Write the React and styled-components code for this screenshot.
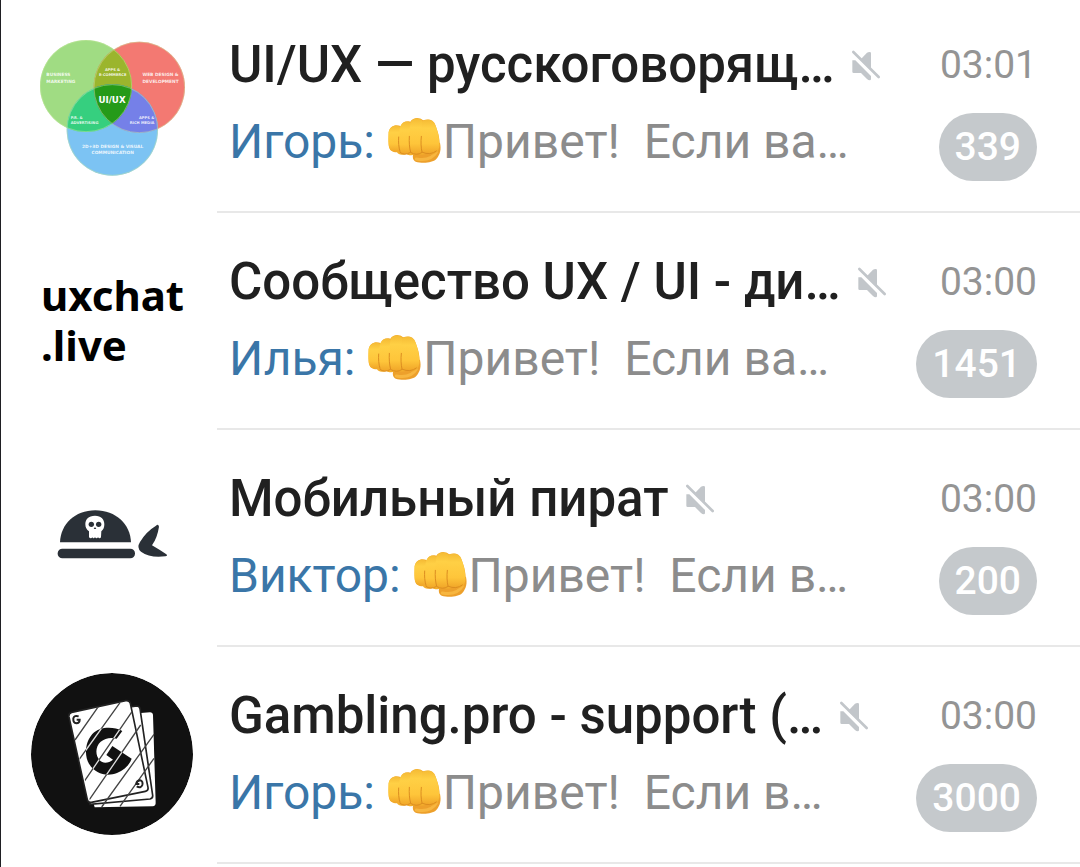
import React from "react";
import styled, { createGlobalStyle } from "styled-components";

const chats = [
  { title: "UI/UX — русскоговорящ…", from: "Игорь", text: "Привет!  Если ва…", time: "03:01", unread: 339, avatar: "venn" },
  { title: "Сообщество UX / UI - ди…", from: "Илья", text: "Привет!  Если ва…", time: "03:00", unread: 1451, avatar: "uxchat" },
  { title: "Мобильный пират", from: "Виктор", text: "Привет!  Если в…", time: "03:00", unread: 200, avatar: "pirate" },
  { title: "Gambling.pro - support (…", from: "Игорь", text: "Привет!  Если в…", time: "03:00", unread: 3000, avatar: "cards" }
];

const VennLogo = () => (
  <Logo viewBox="3 -24 486 486" aria-hidden="true">
    <defs>
      <clipPath id="green"><circle cx="168" cy="168" r="138" /></clipPath>
      <clipPath id="red"><circle cx="328" cy="172" r="137" /></clipPath>
    </defs>
    <circle cx="168" cy="168" r="138" fill="#a0dc84" />
    <circle cx="328" cy="172" r="137" fill="#f37a72" />
    <circle cx="247" cy="300" r="137" fill="#7cc3f3" />
    <circle cx="328" cy="172" r="137" fill="#9cb52e" clipPath="url(#green)" />
    <circle cx="247" cy="300" r="137" fill="#37cf7f" clipPath="url(#green)" />
    <g clipPath="url(#red)">
      <circle cx="247" cy="300" r="137" fill="#7580e8" />
      <g clipPath="url(#green)">
        <circle cx="247" cy="300" r="137" fill="#259a1a" />
      </g>
    </g>
    <g fill="none" stroke="#c8e8a0" strokeWidth="2" opacity="0.7">
      <circle cx="168" cy="168" r="137" />
      <circle cx="328" cy="172" r="136" />
      <circle cx="247" cy="300" r="136" />
    </g>
    <g fill="#fff" fillOpacity="0.85" fontFamily="'DejaVu Sans', sans-serif" fontWeight="700" fontSize="13">
      <text x="49" y="139">BUSINESS</text>
      <text x="49" y="158">MARKETING</text>
      <text x="248" y="122" textAnchor="middle" fontSize="11">APPS &amp;</text>
      <text x="248" y="137" textAnchor="middle" fontSize="11">E-COMMERCE</text>
      <text x="446" y="139" textAnchor="end">WEB DESIGN &amp;</text>
      <text x="446" y="158" textAnchor="end">DEVELOPMENT</text>
      <text x="122" y="266" fontSize="11">P.R. &amp;</text>
      <text x="122" y="281" fontSize="11">ADVERTISING</text>
      <text x="373" y="266" textAnchor="end" fontSize="11">APPS &amp;</text>
      <text x="373" y="281" textAnchor="end" fontSize="11">RICH MEDIA</text>
      <text x="248" y="354" textAnchor="middle">2D+3D DESIGN &amp; VISUAL</text>
      <text x="248" y="372" textAnchor="middle">COMMUNICATION</text>
      <text x="246" y="218" textAnchor="middle" fontSize="26" fillOpacity="1">UI/UX</text>
    </g>
  </Logo>
);

const PirateLogo = () => (
  <Logo viewBox="-27 -117 486 486" aria-hidden="true">
    <path d="M60 142C62 88 104 46 166 46S271 88 273 142Z" fill="#2a3037" />
    <rect x="53" y="161" width="232" height="29" rx="14" fill="#2a3037" />
    <path d="M348 92Q355 86 357 95Q352 128 336 151Q358 164 378 177Q385 182 376 184Q330 190 303 170Q289 158 300 141Q318 110 348 92Z" fill="#2a3037" />
    <path d="M165 62C145 62 136 74 136 88C136 98 140 104 147 109L147 127Q153 133 157 127Q160 133 165 127Q170 133 174 127Q179 133 183 127L184 109C191 104 193 97 193 88C193 73 184 62 165 62Z" fill="#fff" />
    <circle cx="154" cy="88" r="8" fill="#2a3037" />
    <circle cx="176" cy="88" r="8" fill="#2a3037" />
    <path d="M165 96L169 102L161 102Z" fill="#2a3037" />
  </Logo>
);

const CardsLogo = () => (
  <Logo viewBox="33 24 486 486" aria-hidden="true">
    <defs>
      <clipPath id="deck">
        <path d="M145 145L325 107L404 145L407 424L215 428Z" />
      </clipPath>
      <clipPath id="gMark">
        <path d="M307 198C280 184 239 184 217 207C195 232 192 272 208 298C226 328 262 335 291 324C312 316 328 301 335 281L277 243L259 270L279 284C266 295 248 296 239 286C225 271 226 244 242 230C255 219 273 216 290 221Z" />
      </clipPath>
    </defs>
    <circle cx="276" cy="267" r="243" fill="#111" />
    <path d="M222 420L215 156L390 142Q398 142 399 150L407 414Q407 423 398 424L224 427Z" fill="#fff" />
    <path d="M210 418L180 148L350 123Q358 123 360 131L398 391Q399 400 390 402Z" fill="#fff" stroke="#222" strokeWidth="5" />
    <path d="M155 142L317 107Q328 105 331 115L384 367Q386 377 376 379L214 412Q204 414 202 404L147 156Q145 145 155 142Z" fill="#fff" stroke="#222" strokeWidth="5" />
    <g clipPath="url(#deck)" stroke="#444" strokeWidth="4">
      <path d="M235 125L165 225M300 113L175 287M336 140L184 362M362 180L204 410M402 208L245 426M402 280L300 424" />
    </g>
    <path d="M307 198C280 184 239 184 217 207C195 232 192 272 208 298C226 328 262 335 291 324C312 316 328 301 335 281L277 243L259 270L279 284C266 295 248 296 239 286C225 271 226 244 242 230C255 219 273 216 290 221Z" fill="#111" />
    <g clipPath="url(#gMark)" stroke="#ddd" strokeWidth="4">
      <path d="M300 113L175 287M336 140L184 362M362 180L204 410M402 208L245 426" />
    </g>
    <g fill="none" stroke="#222" strokeWidth="6">
      <path d="M176 154Q163 150 160 160Q159 174 169 175Q179 174 179 164L170 164" />
      <path d="M350 364Q363 371 367 360Q370 348 360 346Q349 348 349 357L358 357" />
    </g>
  </Logo>
);

const Muted = () => (
  <MutedIcon viewBox="66 58 90 99" role="img" aria-label="Без звука">
    <path d="M96 88L114 69Q117 67 122 67Q126 67 126 71V119Z" />
    <path d="M70 92L79 92L126 139V148Q126 152 122 152Q118 152 114 148L96 130H74Q70 130 70 126Z" />
    <path d="M73 67L149 142" stroke="#c2c6ca" strokeWidth="8" strokeLinecap="round" />
  </MutedIcon>
);

const Fist = () => (
  <FistIcon viewBox="54 14 168 150" role="img" aria-label="👊">
    <defs>
      <linearGradient id="skin" x1="0" y1="0" x2="0" y2="1">
        <stop offset="0" stopColor="#f5bb35" />
        <stop offset="0.25" stopColor="#ffd045" />
        <stop offset="0.7" stopColor="#fec53a" />
        <stop offset="1" stopColor="#f0a528" />
      </linearGradient>
    </defs>
    <path d="M134 126C130 138 130 150 140 154C160 160 190 158 202 146C214 132 217 116 213 98L190 90Z" fill="#eda02b" />
    <path d="M142 146C165 150 190 146 202 126" fill="none" stroke="#f7b640" strokeWidth="9" strokeLinecap="round" />
    <path d="M59 66C62 48 80 40 96 48C100 34 112 30 124 34C132 20 152 20 162 30C178 24 194 28 199 44C206 62 213 82 212 106C211 120 202 131 188 132C182 132 178 130 174 128C168 134 150 134 144 129C138 136 118 137 112 130C100 136 88 134 84 126C66 126 60 116 59 104Z" fill="#f3ad2c" />
    <path d="M59 66C62 48 78 42 94 50L92 118C86 127 68 126 63 117C57 104 57 84 59 66Z" fill="url(#skin)" />
    <path d="M94 48C98 34 112 30 126 38L122 124C116 134 98 134 93 126C88 110 88 70 94 48Z" fill="url(#skin)" />
    <path d="M125 36C132 22 152 21 162 34L156 126C148 133 132 134 126 126C119 108 119 62 125 36Z" fill="url(#skin)" />
    <path d="M160 32C176 24 194 28 199 44C206 62 212 82 211 106C209 122 199 130 186 130C176 131 164 130 160 124C154 106 155 60 160 32Z" fill="url(#skin)" />
    <g fill="none" stroke="#dc8d20" strokeWidth="3" strokeLinecap="round">
      <path d="M89 80C88 96 89 110 93 123" />
      <path d="M121 78C120 96 121 112 125 126" />
      <path d="M157 78C155 96 156 112 159 125" />
      <path d="M93 126Q106 137 123 127M126 127Q142 137 158 127M160 126Q184 136 202 122" />
    </g>
  </FistIcon>
);

const TextLogo = () => (
  <Wordmark>
    uxchat
    <br />
    .live
  </Wordmark>
);

const avatars = {
  venn: <VennLogo />,
  uxchat: <TextLogo />,
  pirate: <PirateLogo />,
  cards: <CardsLogo />
};

const ChatRow = props => {
  const { chat } = props;
  return (
    <Row>
      <Avatar>{avatars[chat.avatar]}</Avatar>
      <Body>
        <TopLine>
          <Title>{chat.title}</Title>
          <Muted />
          <Time>{chat.time}</Time>
        </TopLine>
        <BottomLine>
          <Message>
            <Sender>{chat.from}: </Sender>
            <Fist />
            {chat.text}
          </Message>
          <Badge>{chat.unread}</Badge>
        </BottomLine>
      </Body>
    </Row>
  );
};

const App = () => {
  return (
    <Screen>
      <GlobalStyle />
      <ChatList>
        {chats.map(chat => (
          <ChatRow key={chat.title} chat={chat} />
        ))}
      </ChatList>
    </Screen>
  );
};

/* 
==== Component Styles ====
*/

const GlobalStyle = createGlobalStyle`
  * {
    box-sizing: border-box;
  }

  body {
    margin: 0;
    background: #fff;
    font-family: Roboto, "Noto Sans", sans-serif;
  }
`;

const Screen = styled.main`
  min-height: 100vh;
  border-left: 1px solid #1f1f23;
  overflow: hidden;
`;

/* first row is scrolled slightly under the top edge */
const ChatList = styled.ul`
  margin: -4px 0 0;
  padding: 0;
  list-style: none;
`;

const Row = styled.li`
  display: flex;
`;

const Avatar = styled.div`
  flex: none;
  width: 162px;
  height: 162px;
  margin: 26px 24px 0 30px;
  display: flex;
  align-items: center;
`;

const Logo = styled.svg`
  display: block;
  width: 100%;
  height: 100%;
  border-radius: 50%;
`;

const Wordmark = styled.div`
  padding-left: 10px;
  color: #000;
  font-family: "Noto Sans", sans-serif;
  font-size: 42px;
  font-weight: 700;
  line-height: 50px;
`;

const Body = styled.div`
  flex: 1;
  min-width: 0;
  padding: 40px 43px 30px 12px;
  border-bottom: 2px solid #e8e8e8;
`;

const TopLine = styled.div`
  display: flex;
  align-items: center;
  margin-bottom: 19px;
`;

const BottomLine = styled.div`
  display: flex;
  align-items: flex-start;
  justify-content: space-between;
`;

const Title = styled.h2`
  margin: 0;
  color: #202020;
  font-size: 51px;
  font-weight: 500;
  line-height: 58px;
  white-space: nowrap;
`;

const MutedIcon = styled.svg`
  flex: none;
  width: 30px;
  height: 33px;
  margin-left: 16px;
  fill: #c2c6ca;
`;

const Time = styled.time`
  margin-left: auto;
  color: #949494;
  font-size: 39px;
  line-height: 58px;
`;

const Message = styled.p`
  margin: 0;
  color: #8c8c8c;
  font-size: 48px;
  line-height: 58px;
  white-space: pre;
`;

const Sender = styled.span`
  color: #3a76a8;
`;

const FistIcon = styled.svg`
  width: 56px;
  height: 50px;
  vertical-align: -7px;
`;

const Badge = styled.span`
  flex: none;
  padding: 0 16px;
  border-radius: 34px;
  background: #c5c9cc;
  color: #fff;
  font-size: 39px;
  font-weight: 500;
  line-height: 68px;
`;

export default App;
